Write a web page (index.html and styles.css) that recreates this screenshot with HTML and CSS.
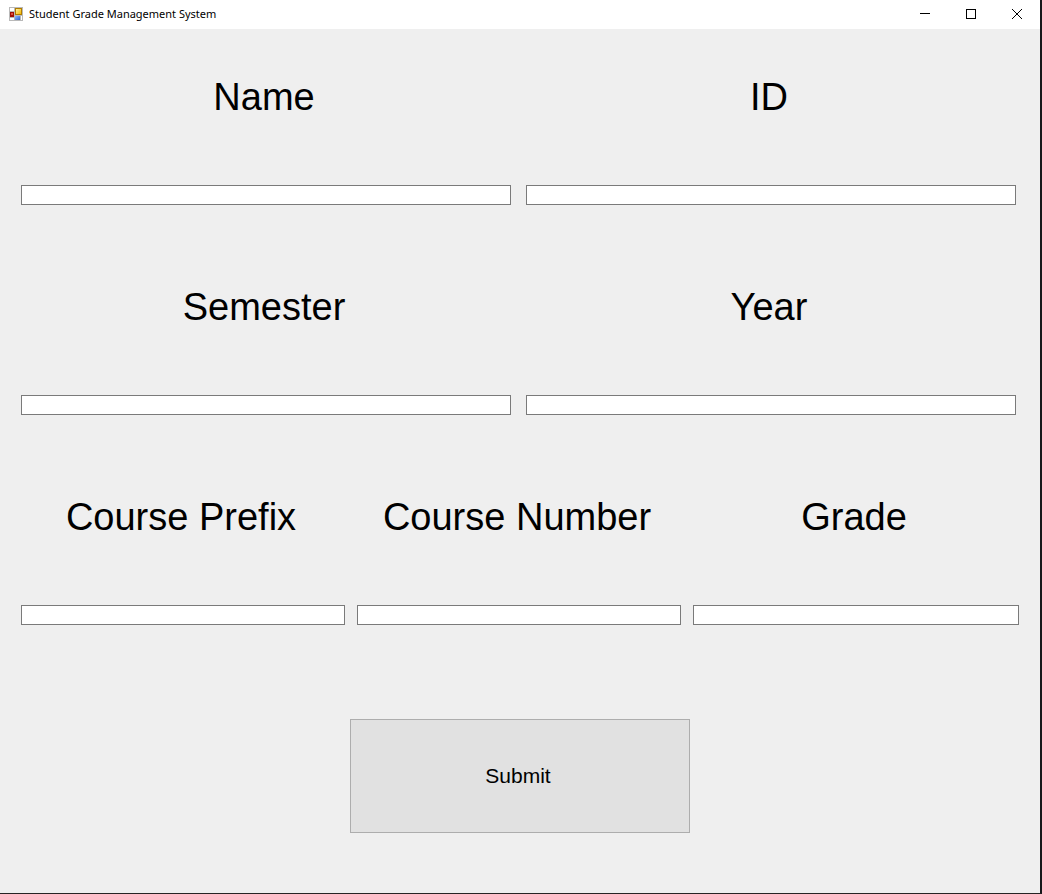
FILE: index.html
```html
<!DOCTYPE html>
<html lang="en">
<head>
<meta charset="utf-8">
<title>Student Grade Management System</title>
<link rel="stylesheet" href="styles.css">
</head>
<body>
<div class="window">
  <header class="titlebar">
    <svg class="app-icon" width="14" height="14" viewBox="0 0 14 14" aria-hidden="true">
      <defs>
        <linearGradient id="gold" x1="0" y1="0" x2="1" y2="1"><stop offset="0" stop-color="#ffefa0"/><stop offset="1" stop-color="#f5b800"/></linearGradient>
        <linearGradient id="blue" x1="0" y1="0" x2="1" y2="1"><stop offset="0" stop-color="#8fb8ff"/><stop offset="1" stop-color="#2a62d0"/></linearGradient>
      </defs>
      <path fill="#b9b9b9" d="M0 0h14v14H0z"/>
      <path fill="#fff" d="M1 1h4v3H1zM1 11h4v2H1zM12 9h1v4h-1z"/>
      <path fill="#a01008" d="M1 5h4v5H1z"/>
      <path fill="#e0503c" d="M2 6h2v2H2z"/>
      <path fill="#b07c00" d="M6 1h7v7H6z"/>
      <path fill="url(#gold)" d="M7 2h5v5H7z"/>
      <path fill="url(#blue)" d="M6 9h5v4H6z"/>
    </svg>
    <h1 class="title">Student Grade Management System</h1>
    <div class="controls">
      <button class="control" type="button" aria-label="Minimize"><svg width="10" height="10" viewBox="0 0 10 10"><path d="M0 4h10v1H0z"/></svg></button>
      <button class="control" type="button" aria-label="Maximize"><svg width="10" height="10" viewBox="0 0 10 10"><path fill-rule="evenodd" d="M0 0h10v10H0zM1 1v8h8V1z"/></svg></button>
      <button class="control" type="button" aria-label="Close"><svg width="10" height="10" viewBox="0 0 10 10"><path d="M0 0L10 10M10 0L0 10" fill="none" stroke="#000"/></svg></button>
    </div>
  </header>
  <form class="form">
    <div class="row row-halves">
      <div class="field"><label class="label" for="name">Name</label><input class="input" id="name" type="text"></div>
      <div class="field"><label class="label" for="student-id">ID</label><input class="input" id="student-id" type="text"></div>
    </div>
    <div class="row row-halves">
      <div class="field"><label class="label" for="semester">Semester</label><input class="input" id="semester" type="text"></div>
      <div class="field"><label class="label" for="year">Year</label><input class="input" id="year" type="text"></div>
    </div>
    <div class="row row-thirds">
      <div class="field"><label class="label" for="prefix">Course Prefix</label><input class="input" id="prefix" type="text"></div>
      <div class="field"><label class="label" for="number">Course Number</label><input class="input" id="number" type="text"></div>
      <div class="field"><label class="label" for="grade">Grade</label><input class="input" id="grade" type="text"></div>
    </div>
    <button class="submit" type="button">Submit</button>
  </form>
</div>
</body>
</html>
```
FILE: styles.css
```css
* {
  box-sizing: border-box;
}

body {
  margin: 0;
  background: #16181a;
  color: #000;
  font-family: "Liberation Sans", Arial, sans-serif;
}

.window {
  display: flex;
  flex-direction: column;
  min-height: 100vh;
  background: #efefef;
  border-right: 2px solid #16181a;
  border-bottom: 1px solid #262424;
}

.titlebar {
  display: flex;
  align-items: center;
  height: 29px;
  padding-left: 9px;
  padding-bottom: 2px;
  background: #fff;
}

.app-icon {
  flex: none;
}

.title {
  flex: 1;
  margin: 0 0 0 6px;
  font-family: "Noto Sans", "Open Sans", sans-serif;
  font-size: 11px;
  font-weight: 400;
  line-height: 16px;
}

.controls {
  display: flex;
  align-self: stretch;
}

.control {
  display: grid;
  place-items: center;
  width: 46px;
  padding: 0;
  border: 0;
  background: transparent;
}

.form {
  display: flex;
  flex: 1;
  flex-direction: column;
  gap: 80px;
  padding: 46px 21px 60px;
}

.row {
  display: grid;
}

.row-halves {
  grid-template-columns: repeat(2, 1fr);
  gap: 15px;
  padding-right: 3px;
}

.row-thirds {
  grid-template-columns: 162fr 162fr 163fr;
  gap: 12px;
}

.field {
  display: flex;
  flex-direction: column;
  gap: 66px;
  min-width: 0;
}

.label {
  padding-right: 4px;
  font-size: 38px;
  line-height: 44px;
  text-align: center;
  white-space: nowrap;
}

.input {
  width: 100%;
  height: 20px;
  padding: 0 3px;
  border: 1px solid #7a7a7a;
  border-radius: 0;
  background: #fff;
  font: 13px "Liberation Sans", Arial, sans-serif;
}

.submit {
  align-self: center;
  width: 34%;
  margin-top: 14px;
  padding: 44px 4px 44px 0;
  border: 1px solid #adadad;
  border-radius: 0;
  background: #e1e1e1;
  color: #000;
  font: 21px/24px "Liberation Sans", Arial, sans-serif;
}
```
